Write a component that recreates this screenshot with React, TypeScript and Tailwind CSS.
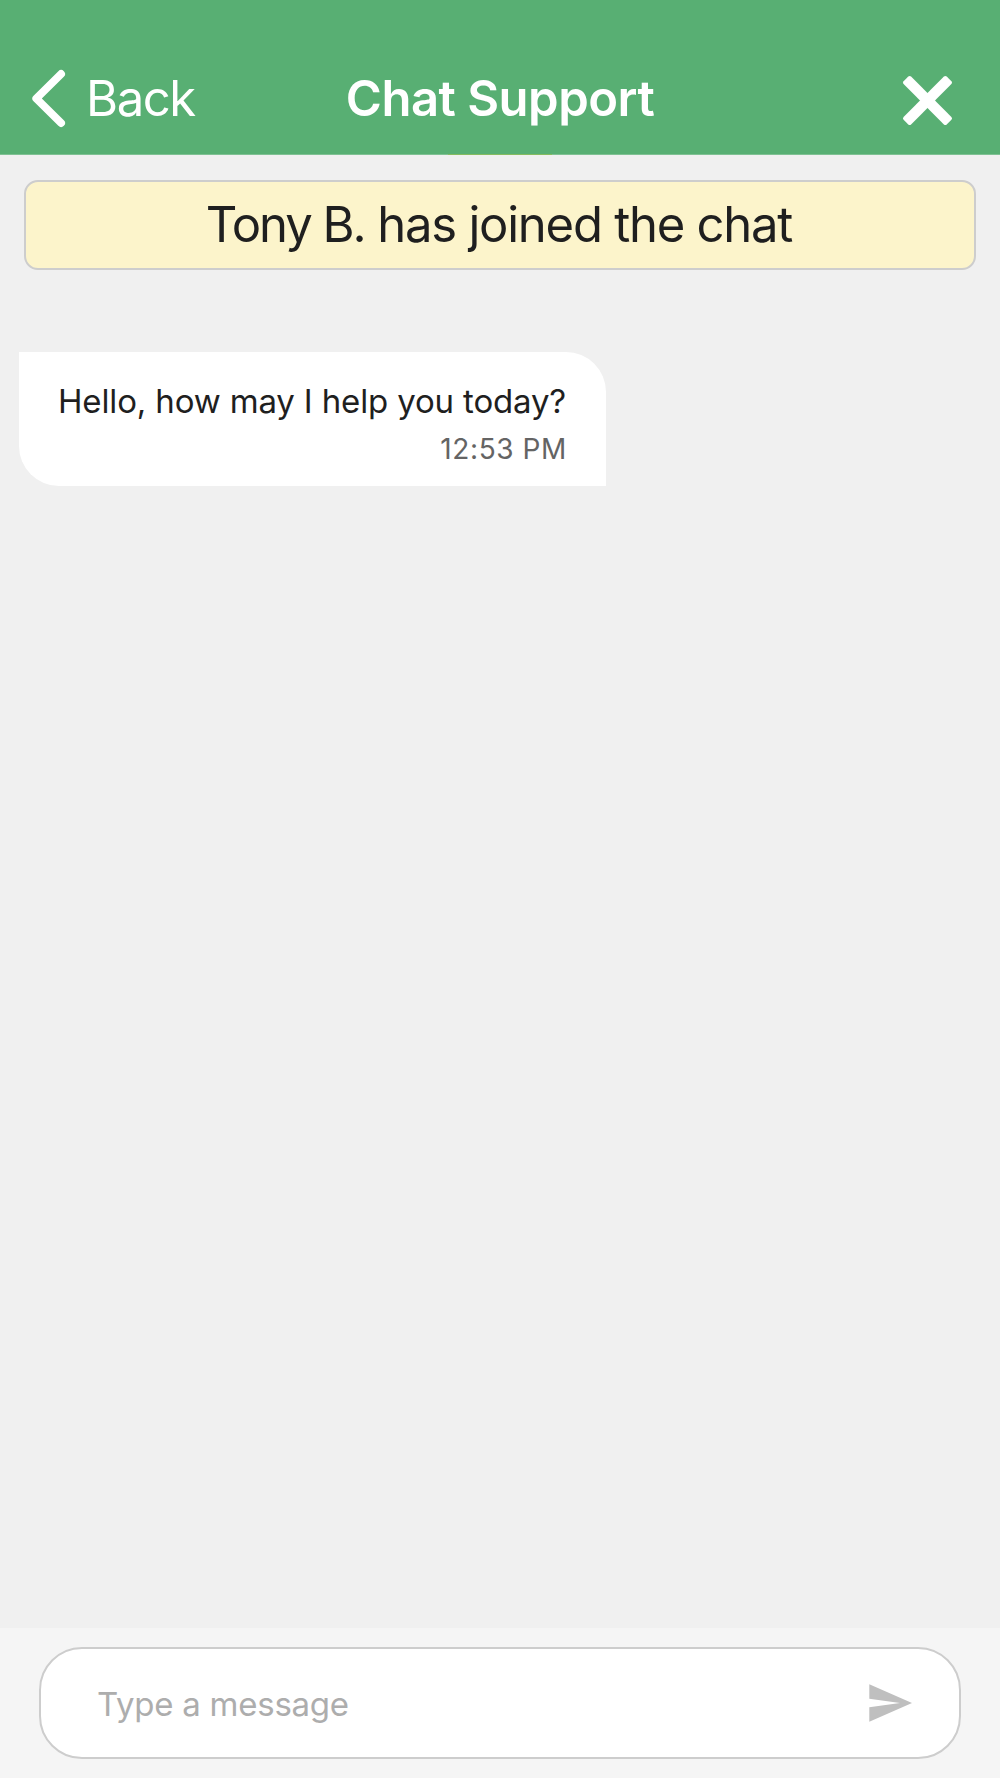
import { useState } from 'react';

type Message = {
    id: number;
    text: string;
    time: string;
};

const agentName = 'Tony B.';

const messages: Message[] = [
    { id: 1, text: 'Hello, how may I help you today?', time: '12:53 PM' },
];

function Header() {
    return (
        <header className="h-[155px] shrink-0 bg-[#58af73] flex flex-col text-white">
            <div className="flex-1 grid grid-cols-3 pt-[68px]">
                <button className="flex items-start pl-[30px]">
                    <svg width="38" height="62" viewBox="0 0 38 62" fill="none" className="shrink-0">
                        <path d="M31.1 5.9L6.3 30.5L31.1 55.1" stroke="currentColor" strokeWidth="7.8" strokeLinecap="round" strokeLinejoin="round" />
                    </svg>
                    <span className="pl-[18px] pt-px text-[49px] leading-[60px] tracking-[-1.4px]">Back</span>
                </button>
                <h1 className="pt-px text-center text-[49px] leading-[60px] font-semibold tracking-[-0.5px] whitespace-nowrap">Chat Support</h1>
                <button className="flex justify-end items-start pr-[46px] pt-[6px]" aria-label="Close">
                    <svg width="53" height="53" viewBox="-26.5 -26.5 53 53" fill="currentColor">
                        <rect x="-30.5" y="-5.3" width="61" height="10.6" rx="2" transform="rotate(45)" />
                        <rect x="-30.5" y="-5.3" width="61" height="10.6" rx="2" transform="rotate(-45)" />
                    </svg>
                </button>
            </div>
            <div className="h-px bg-[#7fc193] flex justify-center">
                <div className="w-[104px] h-px bg-[#86bc5f]" />
            </div>
        </header>
    );
}

function MessageBubble({ message }: { message: Message }) {
    return (
        <div className="w-[587px] h-[134px] bg-white rounded-tr-[40px] rounded-bl-[40px] pl-[39px] pr-[39px] pt-[29px] whitespace-nowrap">
            <p className="text-[33px] leading-10 tracking-[-0.15px] text-[#1f1f1f]">{message.text}</p>
            <p className="mt-[10px] text-[28px] leading-9 tracking-[0.6px] text-[#646464] text-right">{message.time}</p>
        </div>
    );
}

export default function App() {
    const [draft, setDraft] = useState('');

    return (
        <div className="w-[1000px] h-[1778px] flex flex-col bg-[#f0f0f0] font-['Inter',sans-serif] overflow-hidden">
            <Header />

            <main className="flex-1 pt-[25px]">
                <div className="mx-6 h-[90px] border-2 border-[#cdcdcd] rounded-[14px] bg-[#fcf4cb] pt-[13px] pr-[2px] text-center text-[49px] leading-[60px] tracking-[-1.24px] text-[#1f1f1f] whitespace-nowrap">
                    <span className="tracking-[-2px]">{agentName}</span> has joined the chat
                </div>

                <div className="mt-[82px] pl-[19px]">
                    {messages.map((message) => (
                        <MessageBubble key={message.id} message={message} />
                    ))}
                </div>
            </main>

            <footer className="h-[150px] shrink-0 bg-[#f5f5f5] px-[39px] pt-[19px]">
                <div className="h-[112px] flex items-center bg-white border-2 border-[#cdcdcd] rounded-[43px] pl-[56px] pr-[46px]">
                    <input
                        value={draft}
                        onChange={(e) => setDraft(e.target.value)}
                        placeholder="Type a message"
                        className="flex-1 h-11 pt-1 text-[33px] tracking-[-0.25px] text-[#1f1f1f] placeholder:text-[#adadad] outline-none"
                    />
                    <button aria-label="Send">
                        <svg width="44" height="38" viewBox="0 0 44 38" className="fill-[#bfbfbf]">
                            <path d="M0.3 0.3L43 19L0.3 37.7V23.2L31 19L0.3 14.8Z" />
                        </svg>
                    </button>
                </div>
            </footer>
        </div>
    );
}
